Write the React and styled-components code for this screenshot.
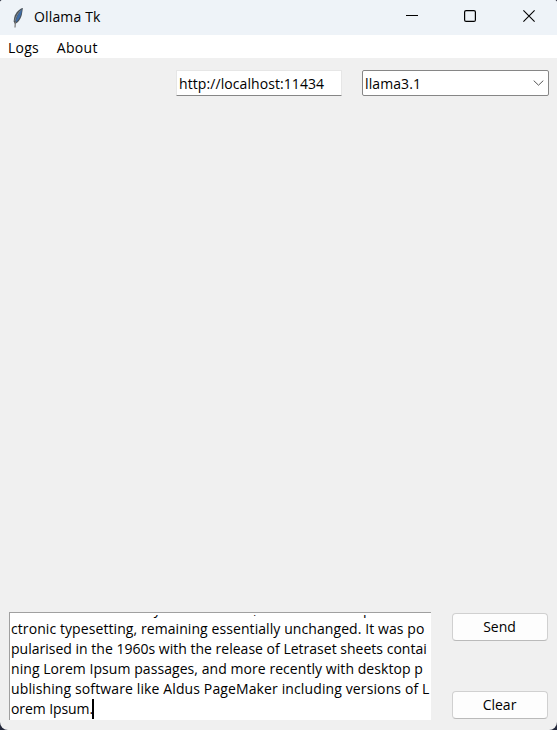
import React from "react";
import styled, { createGlobalStyle } from "styled-components";

const GlobalStyle = createGlobalStyle`
  * { box-sizing: border-box; }
  html, body { margin: 0; background: #23283a; }
  body {
    font-family: "Open Sans", "Noto Sans", sans-serif;
    font-size: 14px;
    color: #000;
    overflow: hidden;
  }
`;

const Window = styled.div`
  width: 557px;
  height: 730px;
  display: flex;
  flex-direction: column;
  background: #f0f0f0;
  border-radius: 3px 3px 8px 8px;
  overflow: hidden;
`;

const TitleBar = styled.header`
  height: 35px;
  flex: none;
  display: flex;
  align-items: center;
  padding-left: 11px;
  background: #eef3f8;
`;

const Title = styled.span`
  flex: 1;
  margin-left: 9px;
  padding-bottom: 2px;
  line-height: 20px;
  letter-spacing: 0.15px;
`;

const Captions = styled.div`
  align-self: flex-start;
  display: flex;
  margin-right: -1px;
`;

const Caption = styled.span`
  width: 58.5px;
  height: 32px;
  display: flex;
  justify-content: center;
  align-items: center;
`;

const MenuBar = styled.nav`
  height: 23px;
  flex: none;
  display: flex;
  gap: 18px;
  padding-left: 8px;
  background: #fff;
  line-height: 25px;
`;

const Text = styled.span`
  white-space: pre;
  letter-spacing: ${(p) => p.$spacing || "0"};
`;

const Toolbar = styled.div`
  display: flex;
  justify-content: flex-end;
  gap: 20px;
  padding: 12px 8px 0 0;
`;

const UrlField = styled.div`
  width: 166px;
  height: 26px;
  padding-left: 2px;
  line-height: 25px;
  background: #fff;
  border: 1px solid #e6e6e6;
  border-bottom-color: #868686;
  border-radius: 1px;
`;

const ModelSelect = styled.div`
  width: 187px;
  height: 26px;
  display: flex;
  align-items: center;
  justify-content: space-between;
  padding: 0 4px 0 2px;
  line-height: 27px;
  background: #fff;
  border: 1px solid #868686;
  border-radius: 2px;
`;

const Output = styled.main`
  flex: 1;
`;

const Composer = styled.footer`
  height: 118px;
  flex: none;
  display: flex;
  justify-content: space-between;
  padding: 0 9px 10px 9px;
`;

const Editor = styled.div`
  width: 422px;
  height: 108px;
  display: flex;
  padding: 2px 0 1px 1px;
  background: #fff;
  border-top: 1px solid #a0a0a0;
  border-left: 1px solid #a0a0a0;
`;

const Viewport = styled.div`
  flex: 1;
  display: flex;
  flex-direction: column;
  justify-content: flex-end;
  overflow: hidden;
`;

const Line = styled.div`
  height: 20px;
  flex: none;
  display: flex;
  line-height: 20px;
  white-space: pre;
  letter-spacing: ${(p) => p.$spacing};
`;

const Caret = styled.span`
  width: 2px;
  height: 20px;
  margin-left: -1px;
  background: #000;
`;

const Actions = styled.div`
  width: 96px;
  padding: 1px 0;
  display: flex;
  flex-direction: column;
  justify-content: space-between;
`;

const Button = styled.button`
  height: 28px;
  padding: 0 1px 0 0;
  font: inherit;
  line-height: 26px;
  color: #000;
  background: #fdfdfd;
  border: 1px solid #d0d0d0;
  border-bottom-color: #bababa;
  border-radius: 4px;
`;

const LINES = [
  ["t has survived not only five centuries, but also the leap into ele", "0.12px"],
  ["ctronic typesetting, remaining essentially unchanged. It was po", "0.08px"],
  ["pularised in the 1960s with the release of Letraset sheets contai", "0.01px"],
  ["ning Lorem Ipsum passages, and more recently with desktop p", "0.06px"],
  ["ublishing software like Aldus PageMaker including versions of L", "0.12px"],
  ["orem Ipsum.", "-0.08px"],
];

function Feather() {
  return (
    <svg width="14" height="22" viewBox="0 0 14 22">
      <path d="M11.900 1C8.500 1.500 4.800 5.500 3.300 10L2.600 14.500L4 17C7.500 15.500 9.800 11.500 10.800 8Z" fill="#4a5259" />
      <path d="M11 2C7.500 6 5.600 9.500 4.500 15.500C8.500 12.500 10.400 8.500 11 2Z" fill="#3d6ca8" />
      <path d="M9.600 3.500C6.500 6.500 4.700 10 3.900 14" fill="none" stroke="#7f8991" strokeWidth=".9" />
      <path d="M4.400 14.500L4 20.500" stroke="#777" strokeWidth="1.200" />
    </svg>
  );
}

export default function App() {
  return (
    <>
      <GlobalStyle />
      <Window>
        <TitleBar>
          <Feather />
          <Title>Ollama Tk</Title>
          <Captions>
            <Caption>
              <svg width="12" height="12"><path d="M0 5.500H12" stroke="#000" /></svg>
            </Caption>
            <Caption>
              <svg width="12" height="12"><rect x=".6" y=".6" width="10.800" height="10.800" rx="1.500" fill="none" stroke="#000" strokeWidth="1.200" /></svg>
            </Caption>
            <Caption>
              <svg width="12" height="12"><path d="M.4.4L11.600 11.600M11.600.4L.4 11.600" stroke="#000" strokeWidth="1.100" /></svg>
            </Caption>
          </Captions>
        </TitleBar>
        <MenuBar>
          <Text $spacing="0.2px">Logs</Text>
          <Text $spacing="0.3px">About</Text>
        </MenuBar>
        <Toolbar>
          <UrlField><Text $spacing="0.08px">http://localhost:11434</Text></UrlField>
          <ModelSelect>
            <Text $spacing="0.1px">llama3.1</Text>
            <svg width="11" height="6"><path d="M.7.6L5.500 5.200L10.300.6" fill="none" stroke="#555" /></svg>
          </ModelSelect>
        </Toolbar>
        <Output />
        <Composer>
          <Editor>
            <Viewport>
              {LINES.map(([text, spacing], i) => (
                <Line key={text} $spacing={spacing}>
                  {text}
                  {i === LINES.length - 1 && <Caret />}
                </Line>
              ))}
            </Viewport>
          </Editor>
          <Actions>
            <Button>Send</Button>
            <Button>Clear</Button>
          </Actions>
        </Composer>
      </Window>
    </>
  );
}
